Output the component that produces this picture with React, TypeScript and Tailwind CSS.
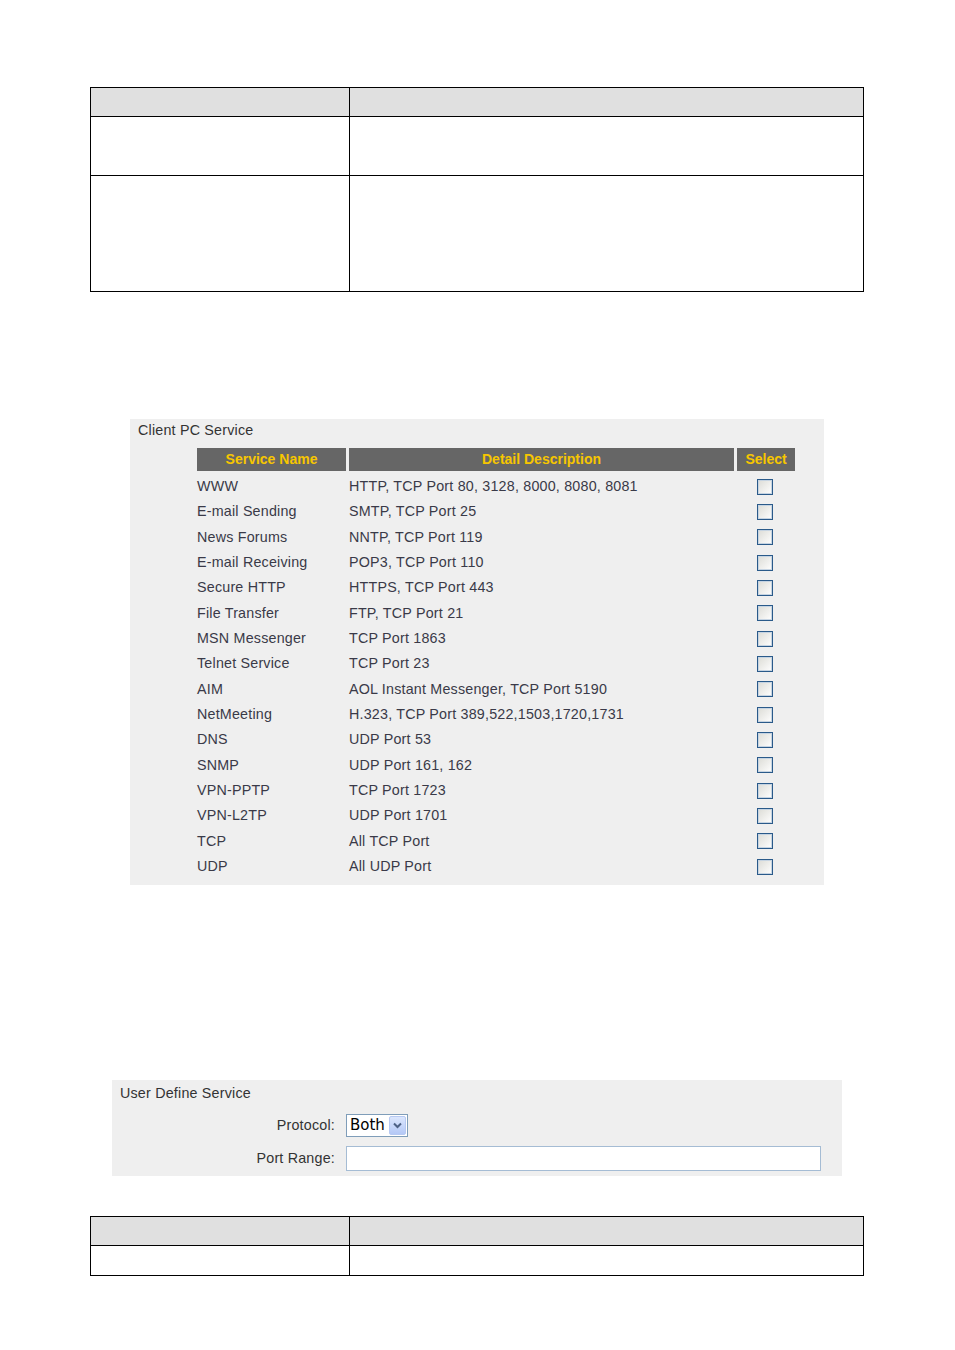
import React from "react";

const rows: [string, string][] = [
  ["WWW", "HTTP, TCP Port 80, 3128, 8000, 8080, 8081"],
  ["E-mail Sending", "SMTP, TCP Port 25"],
  ["News Forums", "NNTP, TCP Port 119"],
  ["E-mail Receiving", "POP3, TCP Port 110"],
  ["Secure HTTP", "HTTPS, TCP Port 443"],
  ["File Transfer", "FTP, TCP Port 21"],
  ["MSN Messenger", "TCP Port 1863"],
  ["Telnet Service", "TCP Port 23"],
  ["AIM", "AOL Instant Messenger, TCP Port 5190"],
  ["NetMeeting", "H.323, TCP Port 389,522,1503,1720,1731"],
  ["DNS", "UDP Port 53"],
  ["SNMP", "UDP Port 161, 162"],
  ["VPN-PPTP", "TCP Port 1723"],
  ["VPN-L2TP", "UDP Port 1701"],
  ["TCP", "All TCP Port"],
  ["UDP", "All UDP Port"],
];

function Checkbox() {
  return (
    <div className="w-[16px] h-[16px] border border-[#2a5a8a] bg-gradient-to-br from-[#dcdcd6] to-white shadow-[inset_0_0_0_1px_#c6d4e2]" />
  );
}

function DocTable({ rowHeights }: { rowHeights: number[] }) {
  return (
    <div className="ml-[90px] w-[774px] border-[1.5px] border-black">
      <div className="grid grid-cols-[259px_1fr] h-[29px] bg-[#e0e0e0] border-b-[1.5px] border-black">
        <div className="border-r-[1.5px] border-black" />
        <div />
      </div>
      {rowHeights.map((h, i) => (
        <div
          key={i}
          className={
            "grid grid-cols-[259px_1fr] bg-white " +
            (i < rowHeights.length - 1 ? "border-b-[1.5px] border-black" : "")
          }
          style={{ height: h }}
        >
          <div className="border-r-[1.5px] border-black" />
          <div />
        </div>
      ))}
    </div>
  );
}

export default function App() {
  return (
    <div
      className="w-[955px] h-[1350px] bg-white pt-[87px] text-[#333333]"
      style={{ fontFamily: '"Liberation Sans", Arial, sans-serif' }}
    >
      <DocTable rowHeights={[59, 115]} />

      <div className="mt-[127px] ml-[130px] w-[694px] h-[466px] bg-[#efefef] pt-[3px]">
        <div className="pl-[8px] text-[14.3px] tracking-[0.2px] leading-[17px] text-[#333]">Client PC Service</div>
        <div className="ml-[67px] mt-[9px] w-[598px]">
          <div className="flex gap-[3px] h-[23px]">
            <div className="w-[149px] bg-[#666666] text-[#f7c600] font-bold text-[14px] flex items-center justify-center">
              Service Name
            </div>
            <div className="w-[385px] bg-[#666666] text-[#f7c600] font-bold text-[14px] flex items-center justify-center">
              Detail Description
            </div>
            <div className="w-[58px] bg-[#666666] text-[#f7c600] font-bold text-[14px] flex items-center justify-center">
              Select
            </div>
          </div>
          <div className="mt-[3px]">
            {rows.map(([name, desc]) => (
              <div key={name} className="flex gap-[3px] h-[25.33px] items-center text-[14.3px] tracking-[0.2px]">
                <div className="w-[149px] text-[#3a3a48] whitespace-nowrap">{name}</div>
                <div className="w-[385px] text-[#3a3a48] whitespace-nowrap">{desc}</div>
                <div className="w-[58px] flex justify-center pr-[2px]">
                  <Checkbox />
                </div>
              </div>
            ))}
          </div>
        </div>
      </div>

      <div className="mt-[195px] ml-[112px] w-[730px] h-[96px] bg-[#efefef] pt-[5px]">
        <div className="pl-[8px] text-[14.3px] tracking-[0.2px] leading-[17px] text-[#333]">User Define Service</div>
        <div className="mt-[12px] flex items-center">
          <div className="w-[223px] text-right text-[14.3px] tracking-[0.2px] text-[#333]">Protocol:</div>
          <div className="ml-[11px] w-[62px] h-[23px] border border-[#7f9db9] bg-white flex items-center justify-between pl-[3px] pr-[1px]">
            <span
              className="text-black leading-none"
              style={{ fontFamily: '"DejaVu Sans", Tahoma, sans-serif', fontSize: 15 }}
            >
              Both
            </span>
            <div className="w-[17px] h-[19px] rounded-[2px] bg-gradient-to-b from-[#dbe6fd] to-[#b4c8f6] border border-[#b7c9f2] flex items-center justify-center">
              <svg width="9" height="7" viewBox="0 0 9 7">
                <path d="M1 1.5 L4.5 5 L8 1.5" stroke="#4d6185" strokeWidth="2" fill="none" />
              </svg>
            </div>
          </div>
        </div>
        <div className="mt-[9px] flex items-center">
          <div className="w-[223px] text-right text-[14.3px] tracking-[0.2px] text-[#333]">Port Range:</div>
          <div className="ml-[11px] w-[475px] h-[25px] border-[1.5px] border-[#a5bcd4] bg-white" />
        </div>
      </div>

      <div className="mt-[40px]">
        <DocTable rowHeights={[29]} />
      </div>
    </div>
  );
}
